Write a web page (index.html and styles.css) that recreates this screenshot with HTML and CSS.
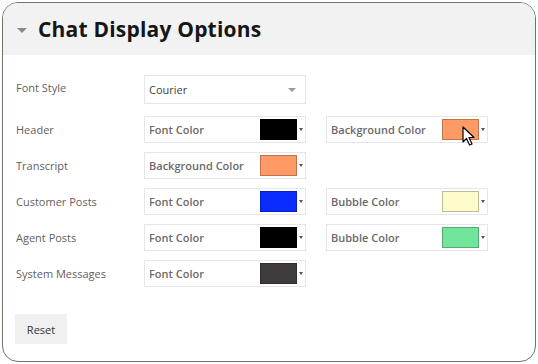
FILE: index.html
```html
<!DOCTYPE html>
<html lang="en">
<head>
    <meta charset="UTF-8">
    <title>Chat Display Options</title>
    <link rel="stylesheet" href="styles.css">
</head>
<body>
    <div class="panel">
        <div class="panel-head">
            <span class="caret"></span>
            <h1>Chat Display Options</h1>
        </div>
        <div class="options">
            <div class="row first">
                <span class="label">Font Style</span>
                <div class="field select">
                    <span>Courier</span>
                    <span class="arrow"></span>
                </div>
            </div>
            <div class="row">
                <span class="label">Header</span>
                <div class="field">
                    <span>Font Color</span>
                    <span class="swatch" style="background:#000000"></span>
                    <span class="arrow small"></span>
                </div>
                <div class="field">
                    <span>Background Color</span>
                    <span class="swatch" style="background:#ff9a66"></span>
                    <span class="arrow small"></span>
                    <svg class="cursor" width="14" height="20" viewBox="0 0 14 20">
                        <path d="M1 1 L1 16 L4.5 12.5 L7.5 19 L10 18 L7 11.5 L12 11.5 Z" fill="#fff" stroke="#000" stroke-width="1.2" stroke-linejoin="round"/>
                    </svg>
                </div>
            </div>
            <div class="row">
                <span class="label">Transcript</span>
                <div class="field">
                    <span>Background Color</span>
                    <span class="swatch" style="background:#ff9a66"></span>
                    <span class="arrow small"></span>
                </div>
            </div>
            <div class="row">
                <span class="label">Customer Posts</span>
                <div class="field">
                    <span>Font Color</span>
                    <span class="swatch" style="background:#0a2cff"></span>
                    <span class="arrow small"></span>
                </div>
                <div class="field">
                    <span>Bubble Color</span>
                    <span class="swatch" style="background:#fffccb"></span>
                    <span class="arrow small"></span>
                </div>
            </div>
            <div class="row">
                <span class="label">Agent Posts</span>
                <div class="field">
                    <span>Font Color</span>
                    <span class="swatch" style="background:#000000"></span>
                    <span class="arrow small"></span>
                </div>
                <div class="field">
                    <span>Bubble Color</span>
                    <span class="swatch" style="background:#72e59a"></span>
                    <span class="arrow small"></span>
                </div>
            </div>
            <div class="row">
                <span class="label">System Messages</span>
                <div class="field">
                    <span>Font Color</span>
                    <span class="swatch" style="background:#403c3d"></span>
                    <span class="arrow small"></span>
                </div>
            </div>
        </div>
        <button class="reset">Reset</button>
    </div>
</body>
</html>
```

FILE: styles.css
```css
body {
    margin: 0;
    background-color: white;
    font-family: "Open Sans", "Noto Sans", sans-serif;
}

.panel {
    margin: 2px;
    border: 1px solid #77716b;
    border-radius: 16px;
    overflow: hidden;
    box-sizing: border-box;
    height: 360px;
    width: 534px;
}

.panel-head {
    background-color: #f2f2f2;
    height: 52px;
    display: flex;
    align-items: center;
    padding-left: 14px;
}

.caret {
    width: 0;
    height: 0;
    border-left: 5px solid transparent;
    border-right: 5px solid transparent;
    border-top: 5px solid #8a8a8a;
    margin-right: 11px;
    margin-top: 2px;
}

h1 {
    margin: 0;
    font-size: 21px;
    font-weight: 700;
    color: #161616;
    letter-spacing: 0.2px;
}

.options {
    padding: 20px 0 0 13px;
    display: flex;
    flex-direction: column;
    gap: 9px;
}

.row {
    display: flex;
    align-items: center;
    height: 27px;
}

.row.first {
    height: 29px;
    margin-bottom: 3px;
    align-items: flex-start;
}

.row.first .label {
    margin-top: 5px;
}

.label {
    width: 128px;
    font-size: 11px;
    color: #5f5f5f;
}

.field {
    position: relative;
    width: 162px;
    height: 100%;
    box-sizing: border-box;
    border: 1px solid #e6e6e6;
    display: flex;
    align-items: center;
    padding-left: 4px;
    margin-right: 20px;
    font-size: 11px;
    color: #6a6a6a;
    font-weight: 600;
}

.field span:first-child {
    flex: 1;
}

.select {
    font-weight: 400;
    color: #444;
}

.swatch {
    width: 37px;
    height: 21px;
    box-sizing: border-box;
    border: 1px solid rgba(0, 0, 0, 0.25);
}

.arrow {
    width: 0;
    height: 0;
    border-left: 4px solid transparent;
    border-right: 4px solid transparent;
    border-top: 4px solid #999;
    margin: 0 9px 0 0;
}

.arrow.small {
    border-left-width: 2.5px;
    border-right-width: 2.5px;
    border-top: 3px solid #555;
    margin: 0 2px 0 2px;
}

.cursor {
    position: absolute;
    left: 135px;
    top: 9px;
}

.reset {
    margin: 27px 0 0 12px;
    width: 52px;
    height: 30px;
    border: none;
    background-color: #f0f0f0;
    font-family: "Open Sans", "Noto Sans", sans-serif;
    font-size: 11px;
    color: #333;
}
```
